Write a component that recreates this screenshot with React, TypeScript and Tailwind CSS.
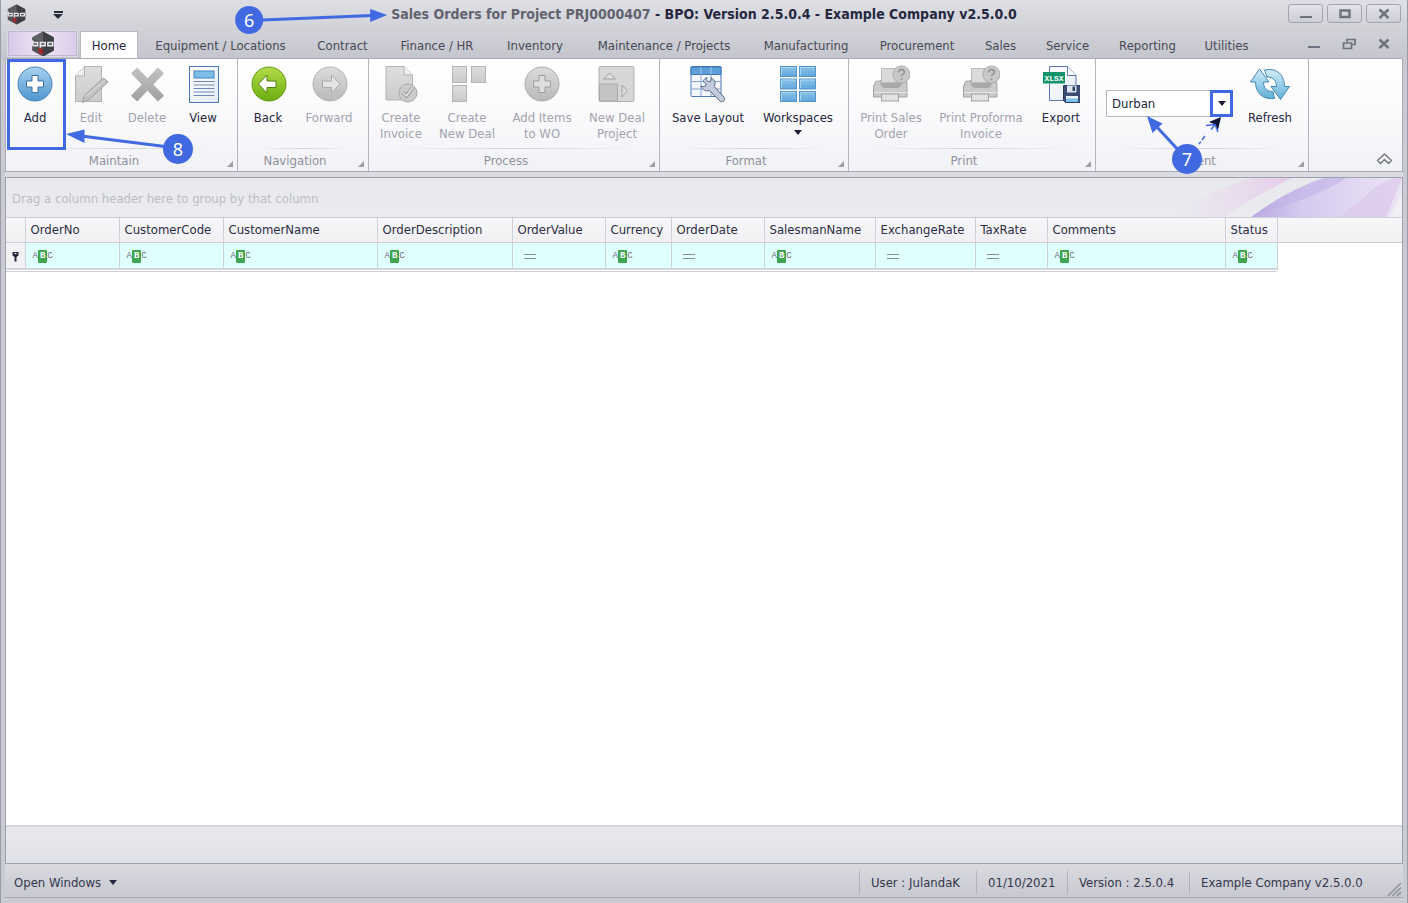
import React from "react";

const BLUE = "#4169e1";

function Logo({ className }: { className: string }) {
  return (
    <svg viewBox="0 0 24 24" className={className} aria-hidden="true">
      <path d="M12 0.5 22 6v12L12 23.5 2 18V6z" fill="#505154" />
      <path d="M12 0.5 22 6 12 12 2 6z" fill="#5f6063" />
      <path d="M12 0.5 22 6v12l-10 5.500z" fill="#3f4044" />
      <path d="M8 15l3 1v6l-3-2z" fill="#a8282e" />
      <path d="M11 17l3 2-3 2z" fill="#7d2228" />
      <path d="M2.500 8.500v5M2.500 10.700h4.500v2.800h-4.500M9.500 15.500v-4.800h4.500v2.800H9.500M16.500 10.700h4.500v2.800h-4.500z" stroke="#e9e9ec" strokeWidth="1.400" fill="none" />
    </svg>
  );
}

function Defs() {
  return (
    <svg width="0" height="0" className="absolute" aria-hidden="true">
      <defs>
        <linearGradient id="blue" x1="0" y1="0" x2="0" y2="1">
          <stop offset="0" stopColor="#a6d2ee" />
          <stop offset="1" stopColor="#4f96cf" />
        </linearGradient>
        <linearGradient id="aqua" x1="0" y1="0" x2="0" y2="1">
          <stop offset="0" stopColor="#d3edf8" />
          <stop offset="1" stopColor="#62afd8" />
        </linearGradient>
        <linearGradient id="green" x1="0" y1="0" x2="0" y2="1">
          <stop offset="0" stopColor="#b4dc4a" />
          <stop offset="1" stopColor="#6cae10" />
        </linearGradient>
        <linearGradient id="grey" x1="0" y1="0" x2="0" y2="1">
          <stop offset="0" stopColor="#dcdcdc" />
          <stop offset="1" stopColor="#b9b9b9" />
        </linearGradient>
        <linearGradient id="sheet" x1="0" y1="0" x2="0" y2="1">
          <stop offset="0" stopColor="#dedede" />
          <stop offset="1" stopColor="#cbcbcb" />
        </linearGradient>
        <linearGradient id="cross" gradientUnits="userSpaceOnUse" x1="0" y1="4" x2="0" y2="34">
          <stop offset="0" stopColor="#c2c2c2" />
          <stop offset="1" stopColor="#a2a2a2" />
        </linearGradient>
        <linearGradient id="tile" x1="0" y1="0" x2="0" y2="1">
          <stop offset="0" stopColor="#8cc4ea" />
          <stop offset="1" stopColor="#5fa6dc" />
        </linearGradient>
        <linearGradient id="paper" x1="0" y1="0" x2="1" y2="1">
          <stop offset="0" stopColor="#ffffff" />
          <stop offset="1" stopColor="#e4ebf8" />
        </linearGradient>
      </defs>
    </svg>
  );
}

function Icon({ children }: { children: React.ReactNode }) {
  return (
    <svg viewBox="0 0 38 38" className="h-[38px] w-[38px] shrink-0" aria-hidden="true">
      {children}
    </svg>
  );
}

const PLUS = "M16 10.500h6v5.500h5.500v6H22v5.500h-6V22h-5.500v-6H16z";

const AddIcon = () => (
  <Icon>
    <circle cx="19" cy="19" r="17" fill="url(#blue)" stroke="#4a83b5" />
    <path d={PLUS} fill="#fff" stroke="#3c6f9f" strokeLinejoin="round" />
  </Icon>
);
const EditIcon = () => (
  <Icon>
    <path d="M12.500 1.500h17v35h-26V11z" fill="url(#sheet)" stroke="#b2b2b2" />
    <path d="M12.500 1.500V11h-9" fill="#eee" stroke="#b2b2b2" />
    <path d="M31.500 13l4.500 4L17 34.500l-6.500 3 2-7z" fill="#c4c4c4" stroke="#a0a0a0" />
    <path d="M14 31l19-16" stroke="#dedede" />
  </Icon>
);
const DeleteIcon = () => (
  <Icon>
    <path d="M9 8.500l21 22M30 8.500L9 30.500" stroke="url(#cross)" strokeWidth="8.500" strokeLinecap="square" />
  </Icon>
);
const ViewIcon = () => (
  <Icon>
    <rect x="5.500" y="1.500" width="29" height="36" fill="url(#paper)" stroke="#4b78b8" />
    <rect x="10" y="6" width="20" height="7" fill="#7dbde8" stroke="#4788c0" />
    <path d="M9.500 16.500h21M9.500 20h21M9.500 23.500h21M9.500 27h21M9.500 30.500h21" stroke="#7187b3" strokeWidth="1.200" />
  </Icon>
);
const BackIcon = () => (
  <Icon>
    <circle cx="20" cy="19" r="17" fill="url(#green)" stroke="#639a1c" />
    <path d="M9.500 19l8.500-9v6h9v6.500h-9V28z" fill="#fff" stroke="#4d7d16" strokeLinejoin="round" />
  </Icon>
);
const ForwardIcon = () => (
  <Icon>
    <circle cx="20" cy="19" r="17" fill="url(#grey)" stroke="#b4b4b4" />
    <path d="M30 19l-8.500-9v6h-9v6.500h9V28z" fill="#e3e3e3" stroke="#ababab" strokeLinejoin="round" />
  </Icon>
);
const InvoiceIcon = () => (
  <Icon>
    <path d="M4 1.500h18L30.500 10v25H4z" fill="url(#sheet)" stroke="#b4b4b4" />
    <path d="M22 1.500V10h8.500" fill="#eee" stroke="#b4b4b4" />
    <circle cx="26" cy="28" r="9" fill="#cbcbcb" stroke="#a9a9a9" />
    <path d="M20.500 27l4 4 6-8.500" stroke="#999" strokeWidth="3.500" fill="none" />
    <path d="M20.500 27l4 4 6-8.500" stroke="#e6e6e6" strokeWidth="1.500" fill="none" />
  </Icon>
);
const DealIcon = () => (
  <Icon>
    {[[4.5, 1.5], [23.5, 1.5], [4.5, 20.5]].map(([x, y]) => (
      <rect key={`${x}-${y}`} x={x} y={y} width="14" height="16" fill="url(#sheet)" stroke="#b4b4b4" />
    ))}
  </Icon>
);
const AddItemsIcon = () => (
  <Icon>
    <circle cx="19" cy="19" r="17" fill="url(#grey)" stroke="#aaa" />
    <path d={PLUS} fill="#dedede" stroke="#9d9d9d" strokeLinejoin="round" />
  </Icon>
);
const ProjectIcon = () => (
  <Icon>
    <rect x="1" y="1.500" width="35" height="35" rx="1.500" fill="#d6d6d6" stroke="#b0b0b0" />
    <path d="M1.500 19h18v17H1.500z" fill="#c4c4c4" stroke="#a9a9a9" />
    <path d="M5.500 14l6-6 6 6zM24 20l5.500 6-5.500 6z" fill="#dedede" stroke="#a0a0a0" />
  </Icon>
);
const LayoutIcon = () => (
  <Icon>
    <rect x="2" y="1.500" width="30" height="30" rx="1" fill="#f4f8fe" stroke="#4d79b3" />
    <path d="M2 2h30v7.500H2z" fill="#5f9fd9" stroke="#3d77b5" />
    <path d="M2 16.500h30M2 24h30M12 9.500v22M22 9.500v22" stroke="#8aa3d2" />
    <path d="M12 2v7M22 2v7" stroke="#9cc8ee" />
    <path
      d="M18 12.500c-1 3 .5 4 2 4.200s2.500-1 2.300-3.700c3.500 2 4.600 5 3 8.500l10 11c1.500 3-2 5.500-4.500 3.500L20.500 25.500c-4 1.200-7-.5-8.500-4.500 2.500 1 4.500.8 5-1s-1.500-2.500-2.500-3 1-3.800 3.500-4.500z"
      fill="#c3ccdb"
      stroke="#56657f"
    />
  </Icon>
);
const WorkspacesIcon = () => (
  <Icon>
    {[1.5, 14, 26.5].map((y) =>
      [1.5, 20.5].map((x) => (
        <g key={`${x}-${y}`}>
          <rect x={x} y={y} width="16" height="10" fill="url(#tile)" stroke="#5595cc" />
          <path d={`M${x + 1} ${y + 9}V${y + 1}h14`} fill="none" stroke="#a9d5f2" />
        </g>
      ))
    )}
  </Icon>
);
const PrintIcon = () => (
  <Icon>
    <path d="M3 18q0-2 3-2h2.500q1.500 6 5 6h12q4 0 4.500-6h2q3 0 3 3v13H1.500V21z" fill="#cacaca" stroke="#a3a3a3" />
    <path d="M8 17q1.500 6 5 6h12q4 0 5-6v-2H8z" fill="#a9a9a9" />
    <rect x="9.500" y="3.500" width="16" height="14" fill="#dadada" stroke="#bcbcbc" />
    <path d="M2 27.500h33" stroke="#e5e5e5" />
    <rect x="9.500" y="29" width="17" height="7" fill="#e2e2e2" stroke="#a3a3a3" />
    <circle cx="29.500" cy="9.500" r="8.500" fill="#c9c9c9" stroke="#aaa" />
    <path d="M26.500 7.300q.5-2.800 3-2.800t3 2.500q0 1.500-1.500 2.300t-1.500 2M29.500 13.300v2" stroke="#989898" strokeWidth="1.800" fill="none" />
  </Icon>
);
const ExportIcon = () => (
  <Icon>
    <path d="M7.500 1.500h18l8.500 9v25H7.500z" fill="url(#paper)" stroke="#5d74b8" />
    <path d="M25.500 1.500v9H34" fill="#fff" stroke="#5d74b8" />
    <rect x="1" y="7" width="22" height="11.500" fill="#12936a" />
    <text x="12" y="16" fontSize="8" fontWeight="700" textAnchor="middle" fill="#fff" fontFamily="Liberation Mono, monospace">XLSX</text>
    <path d="M21.500 20.500h17v17h-15l-2-2z" fill="#3c4c74" stroke="#2d3a60" />
    <rect x="25" y="20.500" width="9.500" height="7" fill="#dce4f2" />
    <rect x="30.500" y="21.500" width="2.500" height="4.500" fill="#33436c" />
    <rect x="24" y="31" width="12" height="6" fill="#7cc0ec" />
    <path d="M24 31h12v2.500H24z" fill="#e9f4fc" />
  </Icon>
);
const RefreshIcon = () => (
  <svg viewBox="0 0 42 38" className="h-[38px] w-[42px] shrink-0" aria-hidden="true">
    <g fill="url(#aqua)" stroke="#4388b5" strokeLinejoin="round">
      <path d="M10.500 4 20 17h-5.500c0 6 3.500 10 9.500 9.500l1.500 7C14 35 6.500 28 6.500 17H1.500z" />
      <path d="M31.500 34.500 22 21.500h5.500c0-6-3.500-9.500-9.500-9.500L15.500 5C28 2.500 35.500 10 35.500 21.500H40.500z" />
    </g>
  </svg>
);

type Tool = { label: string[]; icon: () => React.ReactElement; w: string; off?: boolean; menu?: boolean; mark?: boolean };

const groups: { name: string; w: string; tools: Tool[] }[] = [
  {
    name: "Maintain",
    w: "w-[231px]",
    tools: [
      { label: ["Add"], icon: AddIcon, w: "w-14", mark: true },
      { label: ["Edit"], icon: EditIcon, w: "w-14", off: true },
      { label: ["Delete"], icon: DeleteIcon, w: "w-14", off: true },
      { label: ["View"], icon: ViewIcon, w: "w-14" },
    ],
  },
  {
    name: "Navigation",
    w: "w-[131px]",
    tools: [
      { label: ["Back"], icon: BackIcon, w: "w-[60px]" },
      { label: ["Forward"], icon: ForwardIcon, w: "w-[62px]", off: true },
    ],
  },
  {
    name: "Process",
    w: "w-[291px]",
    tools: [
      { label: ["Create", "Invoice"], icon: InvoiceIcon, w: "w-16", off: true },
      { label: ["Create", "New Deal"], icon: DealIcon, w: "w-[68px]", off: true },
      { label: ["Add Items", "to WO"], icon: AddItemsIcon, w: "w-[82px]", off: true },
      { label: ["New Deal", "Project"], icon: ProjectIcon, w: "w-[68px]", off: true },
    ],
  },
  {
    name: "Format",
    w: "w-[189px]",
    tools: [
      { label: ["Save Layout"], icon: LayoutIcon, w: "w-24" },
      { label: ["Workspaces"], icon: WorkspacesIcon, w: "w-[84px]", menu: true },
    ],
  },
  {
    name: "Print",
    w: "w-[247px]",
    tools: [
      { label: ["Print Sales", "Order"], icon: PrintIcon, w: "w-[84px]", off: true },
      { label: ["Print Proforma", "Invoice"], icon: PrintIcon, w: "w-24", off: true },
      { label: ["Export"], icon: ExportIcon, w: "w-16" },
    ],
  },
];

const tabs: [string, string][] = [
  ["Equipment / Locations", "w-[161px]"],
  ["Contract", "w-[83px]"],
  ["Finance / HR", "w-[106px]"],
  ["Inventory", "w-[90px]"],
  ["Maintenance / Projects", "w-[168px]"],
  ["Manufacturing", "w-[116px]"],
  ["Procurement", "w-[106px]"],
  ["Sales", "w-[61px]"],
  ["Service", "w-[73px]"],
  ["Reporting", "w-[87px]"],
  ["Utilities", "w-[71px]"],
];

const columns: [string, string, string][] = [
  ["OrderNo", "w-[94px]", "abc"],
  ["CustomerCode", "w-[104px]", "abc"],
  ["CustomerName", "w-[154px]", "abc"],
  ["OrderDescription", "w-[135px]", "abc"],
  ["OrderValue", "w-[93px]", "eq"],
  ["Currency", "w-[66px]", "abc"],
  ["OrderDate", "w-[93px]", "eq"],
  ["SalesmanName", "w-[111px]", "abc"],
  ["ExchangeRate", "w-[100px]", "eq"],
  ["TaxRate", "w-[72px]", "eq"],
  ["Comments", "w-[178px]", "abc"],
  ["Status", "w-[52px]", "abc"],
];

const statusItems: [string, string][] = [
  ["User : JulandaK", "w-[117px]"],
  ["01/10/2021", "w-[91px]"],
  ["Version : 2.5.0.4", "w-[122px]"],
  ["Example Company v2.5.0.0", "w-[190px]"],
];

function Badge({ n, className }: { n: number; className: string }) {
  return (
    <span className={`absolute z-20 flex items-center justify-center rounded-full bg-[#4169e1] font-['Noto_Sans',sans-serif] text-lg leading-none font-normal text-white ${className}`}>
      {n}
    </span>
  );
}

function ToolButton({ tool }: { tool: Tool }) {
  const Glyph = tool.icon;
  return (
    <div className={`relative flex justify-center ${tool.w}`}>
      <button type="button" disabled={tool.off} className={`flex flex-col items-center pt-[6px] leading-4 whitespace-nowrap ${tool.off ? "text-[#a2a3ac]" : "text-[#26283e]"}`}>
        <Glyph />
        <span className="mt-[7px] flex flex-col items-center">
          {tool.label.map((line) => (
            <span key={line}>{line}</span>
          ))}
        </span>
        {tool.menu && <span className="mt-1 border-x-4 border-t-[5px] border-x-transparent border-t-[#1d1f33]" />}
      </button>
      {tool.mark && (
        <>
          <span className="pointer-events-none absolute top-0 left-0 h-[91px] w-[59px] border-[3px] border-[#4169e1]" />
          <svg className="pointer-events-none absolute top-[68px] left-[58px] z-10" width="120" height="34" aria-hidden="true">
            <path d="M16 9l88 11" stroke={BLUE} strokeWidth="3" />
            <path d="M1 7 19.500 2.500v13.500z" fill={BLUE} />
          </svg>
          <Badge n={8} className="top-[75px] left-[156px] h-[30px] w-[30px]" />
        </>
      )}
    </div>
  );
}

function Group({ name, w, children }: { name: string; w: string; children: React.ReactNode }) {
  return (
    <section aria-label={name} className={`relative flex h-full shrink-0 flex-col border-r border-[#b4b5c0] ${w}`}>
      <div className="flex flex-1">{children}</div>
      <div className="mx-5 h-px bg-linear-to-r from-transparent via-[#d2d3da] to-transparent" />
      <h2 className="h-[22px] pr-4 text-center leading-6 text-[#90919c]">{name}</h2>
      <span className="absolute right-1 bottom-1 border-b-[6px] border-l-[6px] border-b-[#9d9ea8] border-l-transparent" />
    </section>
  );
}

function WinGlyph({ kind }: { kind: "min" | "max" | "restore" | "close" }) {
  return (
    <svg width="14" height="12" viewBox="0 0 14 12" fill="none" stroke="#71727f" strokeWidth="2" aria-hidden="true">
      {kind === "min" && <path d="M1 9h12" />}
      {kind === "max" && <path d="M2.500 2.500h9v6.500h-9z" strokeWidth="2.500" />}
      {kind === "restore" && <path d="M5 4V1.500h8V6.500h-3M1.500 5h8v5.500h-8z" strokeWidth="1.700" />}
      {kind === "close" && <path d="M2.500 1.500l9 8.500M11.500 1.500L2.500 10" strokeWidth="2.500" />}
    </svg>
  );
}

export default function App() {
  return (
    <div className="flex min-h-screen flex-col overflow-hidden border-x border-[#9a9ba9] bg-[#c9cad2] px-1 font-['DejaVu_Sans_Condensed','DejaVu_Sans',sans-serif] text-[13px] text-[#33354b]">
      <Defs />
      <header className="-mx-1 bg-linear-to-b from-[#dedfe4] to-[#c5c6cd] px-1">
        <div className="relative flex h-[31px] items-start">
          <Logo className="mt-1 ml-px h-[21px] w-[21px]" />
          <button type="button" aria-label="Customize toolbar" className="mt-[11px] ml-[26px] flex flex-col items-center gap-px">
            <span className="h-[2px] w-[9px] bg-[#2a2b3a]" />
            <span className="border-x-[5px] border-t-[5px] border-x-transparent border-t-[#2a2b3a]" />
          </button>
          <h1 className="absolute top-1 left-1/2 -translate-x-1/2 text-sm font-bold whitespace-nowrap text-[#262840]">
            <span className="text-[#62636f]">Sales Orders for Project PRJ0000407</span> - BPO: Version 2.5.0.4 - Example Company v2.5.0.0
            <svg className="absolute top-0 right-full mr-[3px]" width="130" height="22" aria-hidden="true">
              <path d="M4 16l110-4.500" stroke={BLUE} strokeWidth="3" />
              <path d="M129 11 112 5v13z" fill={BLUE} />
            </svg>
            <Badge n={6} className="top-[2px] right-full mr-[128px] h-7 w-7" />
          </h1>
          <div className="mt-1 mr-[2px] ml-auto flex gap-1">
            {(["min", "max", "close"] as const).map((k) => (
              <button key={k} type="button" aria-label={k} className="flex h-[19px] w-[35px] items-center justify-center rounded-[3px] border border-[#a3a4b0] bg-linear-to-b from-[#e3e4e9] to-[#cdced6]">
                <WinGlyph kind={k} />
              </button>
            ))}
          </div>
        </div>
        <nav className="flex h-[27px] items-end">
          <button type="button" aria-label="Application menu" className="mb-[2px] ml-[3px] flex h-[25px] w-[69px] items-center justify-center border border-[#bdb8cc] bg-linear-to-r from-[#d8c9ea] via-[#efe6f4] to-[#dccbeb] outline-1 outline-[#dcdde4]">
            <Logo className="h-[26px] w-[26px]" />
          </button>
          <a href="#home" className="ml-[3px] flex h-[27px] w-[58px] items-center justify-center border-x border-t border-[#b9bac4] bg-white pt-[2px] text-[#26283e]">Home</a>
          <div className="ml-[2px] flex h-[27px] items-center pt-[3px] whitespace-nowrap text-[#474955]">
            {tabs.map(([t, w]) => (
              <a key={t} href={`#${t.split(" ")[0].toLowerCase()}`} className={`text-center ${w}`}>{t}</a>
            ))}
          </div>
          <div className="mr-3 mb-2 ml-auto flex gap-[21px]">
            {(["min", "restore", "close"] as const).map((k) => (
              <button key={k} type="button" aria-label={`${k} document`}>
                <WinGlyph kind={k} />
              </button>
            ))}
          </div>
        </nav>
      </header>

      <div className="flex h-[114px] items-stretch border border-[#a9aab6] bg-linear-to-b from-white via-[#fafafc] to-[#f1f2f6] pl-px">
        {groups.map((g) => (
          <Group key={g.name} name={g.name} w={g.w}>
            {g.tools.map((t) => (
              <ToolButton key={t.label.join()} tool={t} />
            ))}
          </Group>
        ))}
        <Group name="Current" w="w-[213px]">
          <div className="relative mt-[31px] ml-[10px] h-[27px] w-[127px]">
            <select aria-label="Current site" defaultValue="Durban" className="h-[27px] w-full appearance-none border border-[#b6b7c1] bg-white pl-[5px] text-[#26283e]">
              <option>Durban</option>
            </select>
            <span className="pointer-events-none absolute top-0 right-0 flex h-[27px] w-[23px] items-center justify-center border-[3px] border-[#4169e1]">
              <span className="border-x-4 border-t-[5px] border-x-transparent border-t-[#1d1f33]" />
            </span>
            <svg className="pointer-events-none absolute top-[25px] left-[39px] z-10" width="80" height="50" aria-hidden="true">
              <path d="M36 38 11 11" stroke={BLUE} strokeWidth="3" />
              <path d="M2 1 17.500 8.500 7.500 18z" fill={BLUE} />
              <path d="M60 21l-6 8" stroke={BLUE} strokeWidth="1.500" strokeDasharray="5 2" />
              <path d="M76 2 64 7 70 9.500 73 15z" fill="#0b1233" />
              <path d="M61 10.500 70 9.500 73 17M70 9.500l-4 5" stroke={BLUE} strokeWidth="1.500" fill="none" />
            </svg>
            <Badge n={7} className="top-[54px] left-[66px] h-[30px] w-[30px]" />
          </div>
          <button type="button" className="ml-2 flex w-[58px] flex-col items-center self-start pt-[6px] leading-4 text-[#26283e]">
            <RefreshIcon />
            <span className="mt-[7px]">Refresh</span>
          </button>
        </Group>
        <button type="button" aria-label="Collapse ribbon" className="mr-[9px] mb-[5px] ml-auto self-end">
          <svg width="17" height="14" viewBox="0 0 17 14" fill="none" stroke="#777885" strokeWidth="1.500" strokeLinejoin="round" aria-hidden="true">
            <path d="M1.500 8.500 8.500 2l7 6.500-3 3-4-4-4 4z" />
          </svg>
        </button>
      </div>
      <div className="h-[5px] shrink-0 bg-[#dbdce2]" />

      <main className="flex flex-1 flex-col border border-[#a0a1ae] bg-white">
        <div className="relative flex h-[39px] items-center overflow-hidden bg-linear-to-b from-[#e8e9ed] to-[#ececf0] pt-[2px] pl-[6px] text-[#bcbdc5]">
          <svg className="absolute top-0 right-0" width="300" height="40" aria-hidden="true">
            <defs>
              <linearGradient id="ribbonA" x1="0" x2="1">
                <stop offset="0" stopColor="#e9dff0" stopOpacity="0" />
                <stop offset="1" stopColor="#e6cbea" />
              </linearGradient>
              <linearGradient id="ribbonB" x1="0" x2="1">
                <stop offset="0" stopColor="#b9a8e2" />
                <stop offset=".35" stopColor="#d5caf0" />
                <stop offset="1" stopColor="#ebe4f4" />
              </linearGradient>
            </defs>
            <path d="M60 40Q110 12 150 0h40Q160 14 120 40z" fill="url(#ribbonA)" />
            <path d="M148 40Q185 12 222 0h78v40z" fill="url(#ribbonB)" />
            <path d="M148 40Q185 12 222 0h22Q225 14 170 32z" fill="#bdaee6" fillOpacity=".5" />
            <path d="M236 40q24-18 34-28 10-8 22-12h8q-8 20-16 40z" fill="#dcc8ea" fillOpacity=".7" />
            <path d="M286 40q10-16 14-26v26z" fill="#f0eff4" />
          </svg>
          Drag a column header here to group by that column
        </div>
        <div className="border-y border-[#cfd0d7] bg-linear-to-b from-[#f7f7f9] to-[#f0f0f3]">
          <div className="h-6" />
        </div>
        <table className="-mt-[26px] w-[1271px] table-fixed border-collapse">
          <thead>
            <tr className="h-[25px] border-b border-[#cfd0d7]">
              <th aria-label="Row indicator" className="w-[19px] border-r border-[#cfd0d7]" />
              {columns.map(([name, w]) => (
                <th key={name} scope="col" className={`border-r border-[#cfd0d7] pl-[5px] text-left font-normal whitespace-nowrap text-[#2b2d42] ${w}`}>{name}</th>
              ))}
            </tr>
          </thead>
          <tbody>
            <tr className="h-[27px] border-b-2 border-[#d3d4da]">
              <td className="border-r border-[#cfd0d7] bg-[#f2f2f5] pt-[2px]">
                <svg width="9" height="11" viewBox="0 0 9 11" className="ml-[5px]" aria-label="Filter row">
                  <path d="M1.500 1h6v3.500L5.500 6v4.500h-2V6l-2-1.500z" fill="#26283a" />
                  <path d="M3.500 2.500h2" stroke="#fff" />
                </svg>
              </td>
              {columns.map(([name, , kind]) => (
                <td key={name} className="border-r border-[#cfd0d7] bg-[#e0ffff] pt-[2px] pl-[7px]">
                  {kind === "abc" ? (
                    <span className="flex items-center font-['Liberation_Mono',monospace] text-[9px] leading-[13px] text-[#6f7077]">
                      A<span className="rounded-[1px] bg-[#3fa650] px-[2px] font-bold text-white">B</span>C
                    </span>
                  ) : (
                    <span className="ml-1 block h-[5px] w-3 border-y border-[#8a8a98]" />
                  )}
                </td>
              ))}
            </tr>
          </tbody>
        </table>
        <div className="mt-px h-px w-[1271px] bg-[#cfd0d7]" />
        <div className="flex-1" />
        <div className="h-[38px] border-t-2 border-[#d5d6dd] bg-linear-to-b from-[#e9e9ed] to-[#e1e2e7]" />
      </main>

      <footer className="mb-[5px] flex h-[34px] items-center border-b border-[#a9aab6] bg-linear-to-b from-[#d9dae0] to-[#c8c9d0] pt-1 pl-[9px]">
        <button type="button" className="flex items-center gap-2">
          Open Windows
          <span className="border-x-4 border-t-[5px] border-x-transparent border-t-[#26283e]" />
        </button>
        <div className="mr-2 ml-auto flex items-center whitespace-nowrap">
          {statusItems.map(([t, w]) => (
            <span key={t} className={`border-l border-[#b0b1bb] py-[2px] pl-[11px] ${w}`}>{t}</span>
          ))}
        </div>
        <svg width="15" height="15" className="mr-px self-end" stroke="#8f909c" strokeWidth="1.500" aria-hidden="true">
          <path d="M1 14 14 1M5.500 14 14 5.500M10 14l4-4" />
        </svg>
      </footer>
    </div>
  );
}
